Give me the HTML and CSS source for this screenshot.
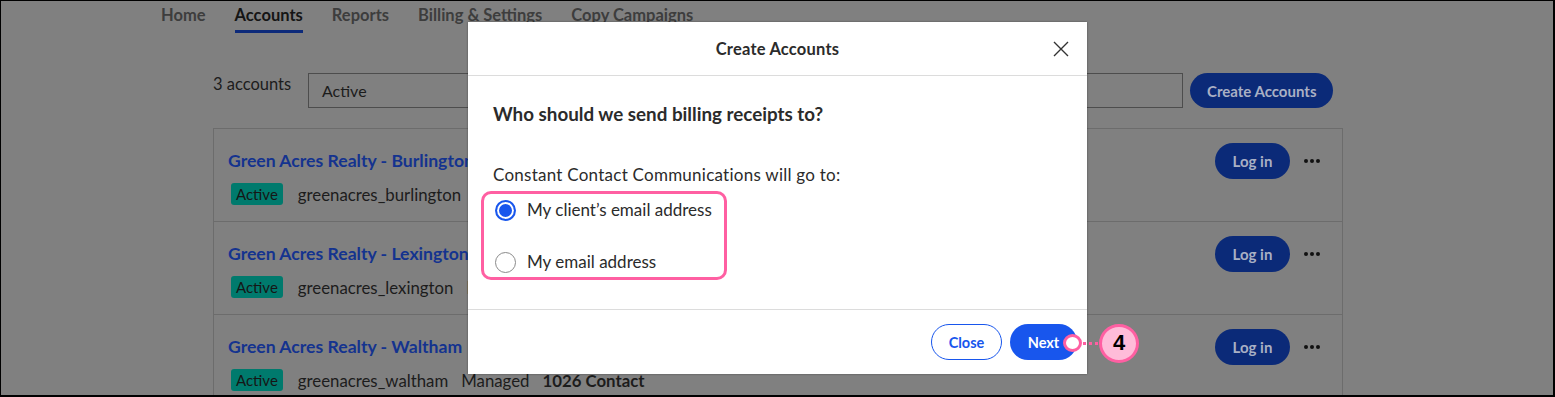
FILE: index.html
```html
<!DOCTYPE html>
<html lang="en">
<head>
<meta charset="utf-8">
<title>Create Accounts</title>
<link rel="stylesheet" href="styles.css">
</head>
<body>
<div class="frame">
  <nav class="tabs">
    <span class="tab">Home</span>
    <span class="tab tab-active">Accounts</span>
    <span class="tab">Reports</span>
    <span class="tab">Billing &amp; Settings</span>
    <span class="tab">Copy Campaigns</span>
  </nav>

  <div class="toolbar">
    <span class="count">3 accounts</span>
    <div class="select">Active</div>
    <button class="btn-dim">Create Accounts</button>
  </div>

  <div class="list">
    <div class="row">
      <div class="row-main">
        <div class="row-title">Green Acres Realty - Burlington</div>
        <div class="row-meta">
          <span class="badge">Active</span>
          <span class="user">greenacres_burlington</span>
        </div>
      </div>
      <div class="row-actions">
        <button class="btn-dim btn-login">Log in</button>
        <span class="dots"><i></i><i></i><i></i></span>
      </div>
    </div>
    <div class="row">
      <div class="row-main">
        <div class="row-title">Green Acres Realty - Lexington</div>
        <div class="row-meta">
          <span class="badge">Active</span>
          <span class="user">greenacres_lexington</span>
          <span class="meta">Managed</span>
        </div>
      </div>
      <div class="row-actions">
        <button class="btn-dim btn-login">Log in</button>
        <span class="dots"><i></i><i></i><i></i></span>
      </div>
    </div>
    <div class="row">
      <div class="row-main">
        <div class="row-title">Green Acres Realty - Waltham</div>
        <div class="row-meta">
          <span class="badge">Active</span>
          <span class="user">greenacres_waltham</span>
          <span class="meta">Managed</span>
          <span class="meta strong">1026 Contact</span>
        </div>
      </div>
      <div class="row-actions">
        <button class="btn-dim btn-login">Log in</button>
        <span class="dots"><i></i><i></i><i></i></span>
      </div>
    </div>
  </div>

  <div class="modal">
    <div class="modal-head">
      <span class="modal-title">Create Accounts</span>
      <svg class="close-x" width="16" height="16" viewBox="0 0 16 16"><path d="M1 1L15 15M15 1L1 15" stroke="#333" stroke-width="1.4" fill="none"/></svg>
    </div>
    <div class="modal-body">
      <div class="question">Who should we send billing receipts to?</div>
      <div class="prompt">Constant Contact Communications will go to:</div>
      <div class="choices">
        <label class="choice"><span class="radio radio-on"></span><span class="choice-text">My client’s email address</span></label>
        <label class="choice"><span class="radio"></span><span class="choice-text">My email address</span></label>
      </div>
    </div>
    <div class="modal-foot">
      <button class="btn-outline">Close</button>
      <button class="btn-primary">Next</button>
    </div>
  </div>

  <div class="callout">
    <span class="callout-dot"></span>
    <span class="callout-line"></span>
    <span class="callout-num">4</span>
  </div>
</div>
</body>
</html>
```

FILE: styles.css
```css
* { box-sizing: border-box; }
html, body { margin: 0; padding: 0; background: #000; }
body { font-family: Lato, "Open Sans", sans-serif; }

.frame {
  position: relative;
  width: 1555px;
  height: 397px;
  background: #808080;
  border-style: solid;
  border-color: #000;
  border-width: 1px 2px 2px 1px;
  overflow: hidden;
}

.tabs {
  display: flex;
  gap: 29px;
  padding-left: 160px;
  height: 32px;
}
.tab {
  font-size: 16.5px;
  font-weight: 700;
  color: #3d3d3d;
  line-height: 28px;
  height: 32px;
}
.tab-active {
  color: #151515;
  border-bottom: 3px solid #0d2a7a;
}

.toolbar {
  display: flex;
  align-items: flex-start;
  margin: 40px 0 0 212px;
  height: 35px;
}
.count {
  font-size: 16.5px;
  color: #1c1c1c;
  line-height: 22px;
  width: 95px;
}
.select {
  width: 875px;
  height: 35px;
  border: 1px solid #4d4d4d;
  font-size: 16px;
  color: #1c1c1c;
  line-height: 33px;
  padding-left: 13px;
}
.btn-dim {
  border: 0;
  border-radius: 18px;
  background: #0b2a78;
  color: #a9b0c4;
  font-family: inherit;
  font-weight: 700;
  font-size: 15px;
  height: 35px;
  padding: 0 17px;
  margin-left: 7px;
}

.list {
  margin: 20px 0 0 212px;
  width: 1130px;
  border: 1px solid #6c6c6c;
  border-bottom: 0;
}
.row {
  display: flex;
  justify-content: space-between;
  align-items: flex-start;
  height: 93px;
  border-bottom: 1px solid #6c6c6c;
  padding: 14px 22px 0 14px;
}
.row-main { padding-top: 7px; }
.row-title {
  font-size: 17.6px;
  font-weight: 700;
  color: #14338f;
  line-height: 22px;
}
.row-meta {
  display: flex;
  align-items: center;
  margin-top: 11px;
  font-size: 16.8px;
  color: #1c1c1c;
}
.badge {
  background: #007a6d;
  color: #161616;
  font-size: 15px;
  height: 22px;
  line-height: 22px;
  padding: 0 5px;
  border-radius: 3px;
  margin-left: 3px;
}
.user { margin-left: 15px; }
.meta { margin-left: 13px; }
.strong { font-weight: 700; }

.row-actions {
  display: flex;
  align-items: center;
}
.btn-login {
  width: 75px;
  height: 36px;
  padding: 0;
  font-size: 15px;
  margin-left: 0;
}
.dots {
  display: flex;
  gap: 2px;
  margin-left: 14px;
}
.dots i {
  width: 4px;
  height: 4px;
  border-radius: 50%;
  background: #111;
}

/* modal sits over the dimmed page */
.modal {
  position: absolute;
  left: 467px;
  top: 21px;
  width: 619px;
  height: 352px;
  background: #fff;
  display: flex;
  flex-direction: column;
  box-shadow: 0 0 2px rgba(0,0,0,0.4);
}
.modal-head {
  position: relative;
  height: 54px;
  border-bottom: 1px solid #dcdcdc;
  display: flex;
  align-items: center;
  justify-content: center;
}
.modal-title {
  font-size: 16.5px;
  font-weight: 700;
  letter-spacing: 0.2px;
  color: #2b2b2b;
}
.close-x {
  position: absolute;
  right: 18px;
  top: 19px;
}
.modal-body {
  flex: 1;
  padding: 26px 24px 0 25px;
}
.question {
  font-size: 18.8px;
  font-weight: 700;
  color: #2b2b2b;
  line-height: 24px;
}
.prompt {
  margin-top: 38px;
  font-size: 17px;
  letter-spacing: 0.25px;
  color: #2b2b2b;
  line-height: 22px;
}
.choices {
  margin: 5px 0 0 -12px;
  width: 246px;
  height: 89px;
  border: 3px solid #ff5fa2;
  border-radius: 10px;
  padding: 1px 0 0 11px;
  display: flex;
  flex-direction: column;
  gap: 22px;
}
.choice {
  display: flex;
  align-items: center;
  height: 30px;
  font-size: 17px;
  color: #2b2b2b;
  gap: 11px;
}
.choice-text { line-height: 20px; }
.radio {
  width: 21px;
  height: 21px;
  border-radius: 50%;
  border: 1px solid #8a8a8a;
  background: #fff;
  flex: none;
}
.radio-on {
  border: 2px solid #1856ed;
  box-shadow: inset 0 0 0 2px #fff, inset 0 0 0 9px #1856ed;
}

.modal-foot {
  height: 65px;
  border-top: 1px solid #dcdcdc;
  display: flex;
  justify-content: flex-end;
  align-items: flex-start;
  gap: 8px;
  padding: 14px 10px 0 0;
}
.btn-outline, .btn-primary {
  height: 36px;
  border-radius: 18px;
  font-family: inherit;
  font-weight: 700;
  font-size: 14.5px;
}
.btn-outline {
  width: 71px;
  background: #fff;
  color: #1856ed;
  border: 1px solid #1856ed;
}
.btn-primary {
  width: 67px;
  background: #1856ed;
  color: #fff;
  border: 0;
  padding-right: 6px;
}

/* annotation callout */
.callout {
  position: absolute;
  left: 1062px;
  top: 322px;
  display: flex;
  align-items: center;
  height: 40px;
}
.callout-dot {
  width: 19px;
  height: 18px;
  border-radius: 50%;
  background: #fff;
  border: 3px solid #ff5fa2;
}
.callout-line {
  width: 16px;
  height: 3px;
  background: repeating-linear-gradient(90deg, #ff5fa2 0 3px, transparent 3px 6px);
  margin-left: 1px;
}
.callout-num {
  width: 40px;
  height: 39px;
  border-radius: 50%;
  background: #ffbcd9;
  border: 3px solid #ff5fa2;
  font-family: "Liberation Sans", Arial, sans-serif;
  font-weight: 700;
  font-size: 22px;
  color: #000;
  display: flex;
  align-items: center;
  justify-content: center;
}
```
